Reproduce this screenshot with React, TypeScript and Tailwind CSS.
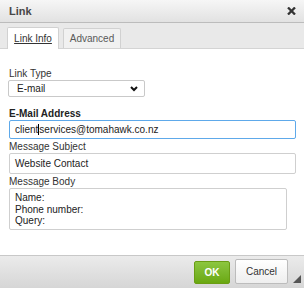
export default function App() {
  return (
    <div className="flex h-[288px] w-[304px] flex-col overflow-hidden bg-white font-['Liberation_Sans',Arial,sans-serif] text-[10px] text-[#222]">
      {/* title bar */}
      <div className="flex h-[23px] shrink-0 items-center justify-between border-b border-[#bcbcbc] bg-gradient-to-b from-[#f6f6f6] to-[#e2e2e2] pl-[9px] pr-[8px]">
        <span className="text-[11px] font-bold text-[#474747]">Link</span>
        <svg width="9" height="8" viewBox="0 0 9 8" aria-hidden>
          <path d="M1 0.5L8 7.5M8 0.5L1 7.5" stroke="#333" strokeWidth="2.3" />
        </svg>
      </div>

      {/* tabs */}
      <div className="flex h-[26px] shrink-0 items-end gap-[4px] border-b border-[#d4d4d4] bg-[#e9e9e9] pl-[7px]">
        <div className="relative -mb-px flex h-[22px] w-[52px] items-center justify-center rounded-t-[2px] border border-b-0 border-[#d1d1d1] bg-white text-[#333]">
          <span className="underline">Link Info</span>
        </div>
        <div className="flex h-[20px] w-[58px] items-center justify-center rounded-t-[2px] border border-b-0 border-[#d1d1d1] bg-[#f1f1f1] text-[#595959]">
          Advanced
        </div>
      </div>

      {/* body */}
      <div className="flex flex-col pl-[9px] pt-[19px]">
        <label className="leading-[12px] text-[#333]">Link Type</label>
        <div className="-ml-px flex h-[17px] w-[137px] items-center justify-between rounded-[2px] border border-[#c9c9c9] bg-white pl-[8px] pr-[6px]">
          <span>E-mail</span>
          <svg width="8" height="6" viewBox="0 0 8 6" aria-hidden>
            <path d="M1 1L4 4L7 1" fill="none" stroke="#111" strokeWidth="2" />
          </svg>
        </div>

        <label className="mt-[11px] font-bold leading-[12px] text-[#222]">E-Mail Address</label>
        <div className="flex h-[19px] w-[287px] items-center rounded-[2px] border border-[#5ea9ea] bg-white pl-[5px]">
          <span>client</span>
          <span className="inline-block h-[11px] w-px bg-black" />
          <span>services@tomahawk.co.nz</span>
        </div>

        <label className="mt-[2px] leading-[12px] text-[#333]">Message Subject</label>
        <div className="flex h-[21px] w-[287px] items-center rounded-[2px] border border-[#cfcfcf] bg-white pl-[5px]">
          Website Contact
        </div>

        <label className="mt-[2px] leading-[12px] text-[#333]">Message Body</label>
        <div className="flex h-[42px] w-[278px] flex-col rounded-[2px] border border-[#cfcfcf] bg-white pl-[5px] pt-[3px] leading-[11.5px]">
          <span>Name:</span>
          <span>Phone number:</span>
          <span>Query:</span>
        </div>
      </div>

      {/* footer */}
      <div className="relative mt-auto flex h-[33px] shrink-0 items-end justify-end gap-[5px] border-t border-[#c8c8c8] bg-gradient-to-b from-[#ebebeb] to-[#d6d6d6] pb-[4px] pr-[16px]">
        <button className="h-[23px] w-[36px] rounded-[2px] border border-[#6a9d14] bg-gradient-to-b from-[#8cc63f] to-[#6aa80f] text-[10px] font-bold text-white">
          OK
        </button>
        <button className="h-[25px] w-[53px] rounded-[2px] border border-[#bcbcbc] bg-gradient-to-b from-white to-[#eeeeee] text-[10px] text-[#333]">
          Cancel
        </button>
        <svg className="absolute bottom-[5px] right-[3px]" width="8" height="8" viewBox="0 0 8 8" aria-hidden>
          <path d="M8 0L8 8L0 8Z" fill="#555" />
        </svg>
      </div>
    </div>
  )
}
